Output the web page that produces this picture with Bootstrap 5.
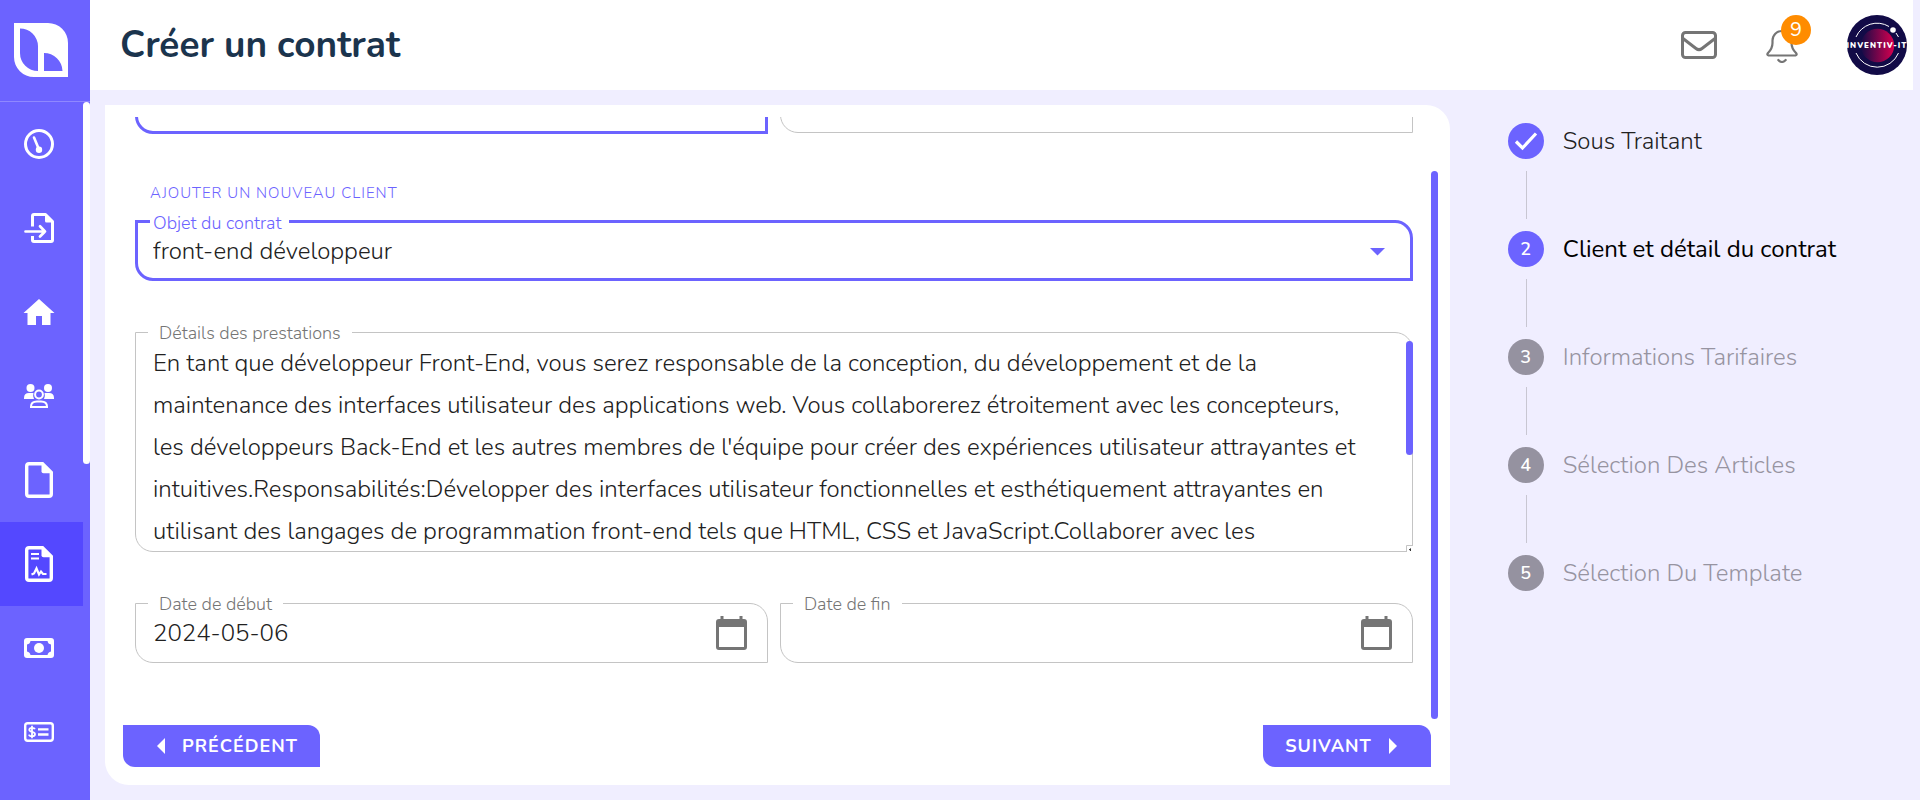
<!DOCTYPE html>
<html lang="fr">
<head>
<meta charset="utf-8">
<meta name="viewport" content="width=device-width, initial-scale=1">
<title>Créer un contrat</title>
<link href="https://cdn.jsdelivr.net/npm/bootstrap@5.3.0/dist/css/bootstrap.min.css" rel="stylesheet">
<style>
:root { --brand: #6c63ff; --brand-dark: #5448ff; --canvas: #f0eeff; --muted: #757575; --line: #c4c4c4; }
body { font-family: Nunito, "Open Sans", sans-serif; font-size: 24px; font-weight: 300; color: #212121; background: var(--canvas); }

.side { width: 90px; background: var(--brand); }
.side-logo { height: 102px; border-bottom: 1px solid #8f88ff; padding: 23px 14px; }
.side-link { height: 84px; padding-right: 5px; color: #fff; }
.side-link.active { background: var(--brand-dark); }
.side-thumb { width: 7px; height: 103px; min-height: 362px; border-radius: 4px; background: #fff; }

.topbar { height: 90px; padding: 0 6px 0 30px; margin-right: 7px; }
.topbar h1 { font-size: 37px; font-weight: 700; color: #1b344d; }
.icon-btn { color: var(--muted); background: none; border: 0; padding: 0; line-height: 0; }
.counter { width: 30px; height: 30px; left: 16px; top: -12px; border-radius: 50%; background: #ff8c00; color: #fff; font-size: 20px; font-weight: 400; line-height: 30px; }

.page-area { padding: 15px; margin-right: 7px; min-height: 0; }
.panel { background: #fff; border-radius: 0 24px; padding: 12px 12px 18px 30px; }
.scroller { margin-bottom: 6px; min-height: 0; }
.fields { margin-right: 18px; gap: 51px; padding-bottom: 56px; }
.fields > * { flex-shrink: 0; }
.panel-thumb { width: 7px; height: 91%; border-radius: 4px; background: var(--brand); }
.pair { gap: 12px; }
.client-group { gap: 17px; }
.client-group .pair { margin-bottom: 32px; }

.field { border: 1px solid var(--line); border-radius: 0 18px; height: 60px; }
.field.on { border: 3px solid var(--brand); height: 61px; }
.field.tall { height: 220px; padding: 9px 0 0; }
.field > label { position: absolute; top: -12px; left: 12px; padding: 0 11px; background: #fff; font-size: 18px; line-height: 24px; color: var(--muted); }
.field.on > label { padding: 0 7px 0 3px; color: var(--brand); }
.field input, .field select, .field textarea { width: 100%; height: 100%; border: 0; outline: 0; background: none; color: inherit; font: inherit; appearance: none; padding: 0 17px; }
.field input { padding-right: 70px; }
.field select { padding: 0 15px; }
.field textarea { display: block; line-height: 42px; resize: none; overflow: hidden; white-space: pre; }
.field-icon { position: absolute; right: 20px; top: 12px; line-height: 0; color: var(--muted); }
.field.on .field-icon { right: 25px; top: 25px; color: var(--brand); }
.area-thumb { position: absolute; right: -1px; top: 8px; width: 7px; height: 114px; border-radius: 4px; background: var(--brand); }
.grip { position: absolute; right: -1px; bottom: -1px; background: #fff; }
.add-client { font-size: 15px; line-height: 20px; letter-spacing: 1px; color: var(--brand); margin-left: 15px; }

.step-btn { height: 42px; border: 0; border-radius: 0 12px; background: var(--brand); color: #fff; font-size: 18px; font-weight: 700; letter-spacing: 1px; gap: 17px; }
.prev-btn { margin-left: -12px; padding: 0 22px 0 34px; }
.next-btn { margin-right: 7px; padding: 0 34px 0 22px; }

.steps { padding: 18px 0 0 58px; }
.step { gap: 19px; height: 36px; color: #212121; }
.step-dot { width: 36px; height: 36px; border-radius: 50%; background: var(--brand); color: #fff; font-size: 18px; font-weight: 600; }
.step.current { color: #000; font-weight: 400; }
.step.todo { color: #9794a1; }
.step.todo .step-dot { background: #9592a0; }
.step-line { width: 1px; height: 48px; margin: 12px 18px; background: #c8c6d2; }
</style>
</head>
<body>
<div class="d-flex vh-100 overflow-hidden">
  <nav class="side flex-shrink-0" aria-label="Menu principal">
    <div class="side-logo">
      <svg width="54" height="54" viewBox="0 0 54 54"><path fill="#fff" fill-rule="evenodd" d="M0 0H34A20 20 0 0 1 54 20V54H20A20 20 0 0 1 0 34ZM6 5.500V30A18 18 0 0 0 24 48V23A18 18 0 0 0 6 5.500ZM30 30V48H48.500A18.500 18.500 0 0 0 30 30Z"/></svg>
    </div>
    <div class="d-flex">
      <div class="flex-grow-1">
        <a href="#" class="side-link d-flex align-items-center justify-content-center" aria-label="Tableau de bord"><svg width="30" height="30" viewBox="0 0 30 30" fill="none" stroke="#fff"><circle cx="15" cy="15" r="13.500" stroke-width="3"/><path d="M10 8.500L15 20.500" stroke-width="2.600" stroke-linecap="round"/><circle cx="15" cy="20.700" r="3.200" fill="#fff" stroke="none"/></svg></a>
        <a href="#" class="side-link d-flex align-items-center justify-content-center" aria-label="Importer"><svg width="30" height="30" viewBox="0 0 30 30" fill="none" stroke="#fff" stroke-width="3" stroke-linejoin="round"><path d="M8.500 13.500V3Q8.500 1.500 10 1.500H21.500L28.500 8.500V27Q28.500 28.500 27 28.500H10Q8.500 28.500 8.500 27V23"/><path d="M21 1L29 9.500H22.500Q21 9.500 21 8Z" fill="#fff" stroke="none"/><path d="M1.500 18.500H21M16 13.300L21 18.500L16 23.500" stroke-width="2.700" stroke-linecap="round"/></svg></a>
        <a href="#" class="side-link d-flex align-items-center justify-content-center" aria-label="Accueil"><svg width="32" height="26" viewBox="0 0 32 26" fill="#fff"><path d="M16 0L31.500 14H27.500V26H19V17H13V26H4.500V14H.5Z"/></svg></a>
        <a href="#" class="side-link d-flex align-items-center justify-content-center" aria-label="Clients"><svg width="30" height="24" viewBox="0 0 30 24" fill="#fff"><circle cx="6.500" cy="4" r="4"/><circle cx="24" cy="4" r="4"/><path d="M0 15V14Q0 9 5 9H9.500Q8.500 12 10 15ZM30 15V14Q30 9 25 9H20.500Q21.500 12 20 15Z"/><circle cx="15" cy="10.500" r="3.900" fill="none" stroke="#fff" stroke-width="2"/><path d="M7 23V22.500Q7 17.500 13 17.500H17Q23 17.500 23 22.500V23Z" fill="none" stroke="#fff" stroke-width="2"/></svg></a>
        <a href="#" class="side-link d-flex align-items-center justify-content-center" aria-label="Documents"><svg width="28" height="36" viewBox="0 0 28 36"><path d="M4 1.700H17.500L26.300 10.500V32Q26.300 34.300 24 34.300H4Q1.700 34.300 1.700 32V4Q1.700 1.700 4 1.700Z" fill="none" stroke="#fff" stroke-width="3.400"/><path d="M16.500 1L27 11.300H18.500Q16.500 11.300 16.500 9.500Z" fill="#fff"/></svg></a>
        <a href="#" class="side-link active d-flex align-items-center justify-content-center" aria-label="Contrats" aria-current="page"><svg width="28" height="36" viewBox="0 0 28 36"><path d="M4 1.700H17.500L26.300 10.500V32Q26.300 34.300 24 34.300H4Q1.700 34.300 1.700 32V4Q1.700 1.700 4 1.700Z" fill="none" stroke="#fff" stroke-width="3.400"/><path d="M16.500 1L27 11.300H18.500Q16.500 11.300 16.500 9.500Z" fill="#fff"/><path d="M6 8H14M6 12.500H14M6.500 28.500L9 27.500L11.500 22.500L14 28.500L16 25.500L18 28H21.500" fill="none" stroke="#fff" stroke-width="2.200"/></svg></a>
        <a href="#" class="side-link d-flex align-items-center justify-content-center" aria-label="Paiements"><svg width="30" height="20" viewBox="0 0 30 20"><rect width="30" height="20" rx="3" fill="#fff"/><path d="M6.500 3H23.500Q24 6 27 6.500V13.500Q24 14 23.500 17H6.500Q6 14 3 13.500V6.500Q6 6 6.500 3Z" fill="#6c63ff"/><circle cx="15" cy="10" r="5" fill="#fff"/></svg></a>
        <a href="#" class="side-link d-flex align-items-center justify-content-center" aria-label="Factures"><svg width="30" height="20" viewBox="0 0 30 20" fill="none" stroke="#fff"><rect x="1.200" y="1.200" width="27.600" height="17.600" rx="2.500" stroke-width="2.400"/><path d="M14 7.300H24.500M14 12.500H24.500" stroke-width="2.300"/><path d="M10.800 7.300Q10.500 5.800 8 5.800Q5.300 5.800 5.300 7.800Q5.300 9.300 8 9.900Q11 10.500 11 12.300Q11 14.300 8 14.300Q5.300 14.300 5 12.600M8 3.800V16.200" stroke-width="1.800"/></svg></a>
      </div>
      <div class="side-thumb"></div>
    </div>
  </nav>

  <div class="flex-grow-1 d-flex flex-column">
    <header class="topbar bg-white d-flex align-items-center justify-content-between flex-shrink-0">
      <h1 class="m-0">Créer un contrat</h1>
      <div class="d-flex align-items-center">
        <button type="button" class="icon-btn me-5" aria-label="Messages"><svg width="36" height="28" viewBox="0 0 36 28" fill="none" stroke="currentColor" stroke-width="3"><rect x="1.500" y="1.500" width="33" height="25" rx="3"/><path d="M2 7.500L15 17.500Q18 19.800 21 17.500L34 7.500"/></svg></button>
        <button type="button" class="icon-btn position-relative me-5" aria-label="Notifications"><svg width="34" height="36" viewBox="0 0 34 36" fill="none" stroke="currentColor" stroke-width="2.200" stroke-linecap="round"><path d="M3.500 28.500H30.500Q32.500 28 31 26Q26.500 21.500 26.500 16V13.500A9.500 9.500 0 0 0 7.500 13.500V16Q7.500 21.500 3 26Q1.500 28 3.500 28.500Z"/><path d="M13.300 33Q17 37 20.700 33"/></svg><span class="counter position-absolute text-center">9</span></button>
        <button type="button" class="icon-btn" aria-label="Profil"><svg width="60" height="60" viewBox="0 0 60 60"><defs><linearGradient id="orb"><stop offset="0" stop-color="#120b47"/><stop offset="1" stop-color="#d9004f"/></linearGradient></defs><circle cx="30" cy="30" r="30" fill="#120b47"/><circle cx="30.500" cy="30.500" r="16.700" fill="url(#orb)"/><path d="M9 22A23 23 0 0 1 42 11.500M49 18L51.500 22M9 38A23 23 0 0 0 51.500 38" fill="none" stroke="#fff"/><circle cx="46" cy="15" r="2.800" fill="#fff"/><text x="30" y="33" text-anchor="middle" font-family="Nunito, Open Sans, sans-serif" font-size="8" font-weight="900" letter-spacing="1" fill="#fff">INVENTIV-IT</text></svg></button>
      </div>
    </header>

    <main class="page-area row g-0 flex-grow-1">
      <form class="panel col-9 d-flex flex-column h-100">
        <div class="scroller d-flex flex-grow-1 overflow-hidden">
          <div class="fields flex-grow-1 d-flex flex-column justify-content-end">
            <div class="client-group d-flex flex-column">
              <div class="pair row row-cols-2 g-0 flex-nowrap">
                <div class="field on position-relative col flex-shrink-1"><input type="text" aria-label="Client"></div>
                <div class="field position-relative col flex-shrink-1"><input type="text" aria-label="Référence du client"></div>
              </div>
              <a href="#" class="add-client align-self-start text-decoration-none">AJOUTER UN NOUVEAU CLIENT</a>
              <div class="field on position-relative">
                <label for="objet">Objet du contrat</label>
                <select id="objet"><option>front-end développeur</option></select>
                <span class="field-icon pe-none"><svg width="15" height="8" viewBox="0 0 15 8"><path d="M0 0H15L7.500 7.500Z" fill="currentColor"/></svg></span>
              </div>
            </div>
            <div class="field tall position-relative">
              <label for="details">Détails des prestations</label>
              <textarea id="details">En tant que développeur Front-End, vous serez responsable de la conception, du développement et de la
maintenance des interfaces utilisateur des applications web. Vous collaborerez étroitement avec les concepteurs,
les développeurs Back-End et les autres membres de l'équipe pour créer des expériences utilisateur attrayantes et
intuitives.Responsabilités:Développer des interfaces utilisateur fonctionnelles et esthétiquement attrayantes en
utilisant des langages de programmation front-end tels que HTML, CSS et JavaScript.Collaborer avec les</textarea>
              <div class="area-thumb"></div>
              <svg class="grip" width="7" height="7" viewBox="0 0 7 7"><path d="M.5 7V.5H7" fill="none" stroke="#c4c4c4"/><path d="M3 5L5 3.500M4.500 6V4" stroke="#333"/></svg>
            </div>
            <div class="pair row row-cols-2 g-0 flex-nowrap">
              <div class="field position-relative col flex-shrink-1">
                <label for="debut">Date de début</label>
                <input id="debut" type="text" value="2024-05-06">
                <span class="field-icon"><svg width="31" height="34" viewBox="0 0 31 34"><path d="M4.500 0H7.500V3H23.500V0H26.500V3H28Q31 3 31 6V31Q31 34 28 34H3Q0 34 0 31V6Q0 3 3 3H4.500ZM3 11V31H28V11Z" fill="currentColor" fill-rule="evenodd"/></svg></span>
              </div>
              <div class="field position-relative col flex-shrink-1">
                <label for="fin">Date de fin</label>
                <input id="fin" type="text">
                <span class="field-icon"><svg width="31" height="34" viewBox="0 0 31 34"><path d="M4.500 0H7.500V3H23.500V0H26.500V3H28Q31 3 31 6V31Q31 34 28 34H3Q0 34 0 31V6Q0 3 3 3H4.500ZM3 11V31H28V11Z" fill="currentColor" fill-rule="evenodd"/></svg></span>
              </div>
            </div>
          </div>
          <div class="panel-thumb align-self-end flex-shrink-0"></div>
        </div>
        <div class="d-flex justify-content-between">
          <button type="button" class="step-btn prev-btn d-flex align-items-center"><svg width="8" height="16" viewBox="0 0 8 16"><path d="M8 0V16L0 8Z" fill="currentColor"/></svg>PRÉCÉDENT</button>
          <button type="button" class="step-btn next-btn d-flex align-items-center">SUIVANT<svg width="8" height="16" viewBox="0 0 8 16"><path d="M0 0V16L8 8Z" fill="currentColor"/></svg></button>
        </div>
      </form>

      <aside class="steps col-3">
        <div class="step d-flex align-items-center"><span class="step-dot d-flex align-items-center justify-content-center"><svg width="24" height="20" viewBox="0 0 24 20"><path d="M2 10.500L8.500 17L22 2.500" fill="none" stroke="#fff" stroke-width="3.200"/></svg></span>Sous Traitant</div>
        <div class="step-line"></div>
        <div class="step current d-flex align-items-center"><span class="step-dot d-flex align-items-center justify-content-center">2</span>Client et détail du contrat</div>
        <div class="step-line"></div>
        <div class="step todo d-flex align-items-center"><span class="step-dot d-flex align-items-center justify-content-center">3</span>Informations Tarifaires</div>
        <div class="step-line"></div>
        <div class="step todo d-flex align-items-center"><span class="step-dot d-flex align-items-center justify-content-center">4</span>Sélection Des Articles</div>
        <div class="step-line"></div>
        <div class="step todo d-flex align-items-center"><span class="step-dot d-flex align-items-center justify-content-center">5</span>Sélection Du Template</div>
      </aside>
    </main>
  </div>
</div>
<script src="https://cdn.jsdelivr.net/npm/bootstrap@5.3.0/dist/js/bootstrap.bundle.min.js"></script>
</body>
</html>
